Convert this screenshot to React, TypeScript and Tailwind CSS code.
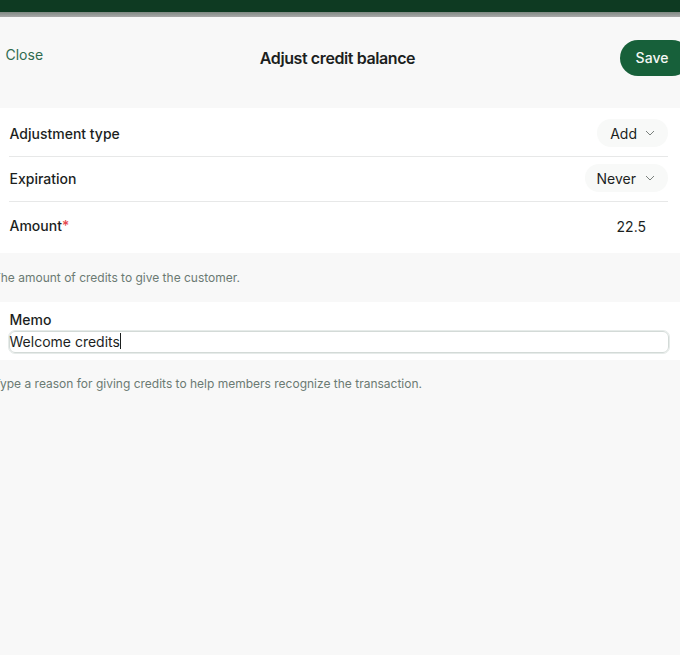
export default function App() {
  const Chevron = () => (
    <svg width="10" height="6" viewBox="0 0 10 6" fill="none" className="ml-[9px] mr-[3px]">
      <path d="M1 1l4 4 4-4" stroke="#7a807d" strokeWidth="1" />
    </svg>
  );
  return (
    <div className="h-[655px] w-[680px] overflow-hidden bg-[#f8f8f8] text-[#1c1f1e] font-['Inter',sans-serif] text-[14px]">
      <div className="h-[12px] bg-[#0e3a22]" />
      <div className="h-[5px] bg-gradient-to-b from-[#7f8883] to-[#a9a9a9]" />
      <header className="relative flex h-[91px] items-start justify-between">
        <button className="mt-[29px] ml-[5.5px] text-[14px] leading-[17px] text-[#2f6b4f]">Close</button>
        <h1 className="absolute left-0 top-[31px] w-[675px] text-center text-[16px] leading-[20px] font-semibold tracking-[-0.4px]">Adjust credit balance</h1>
        <button className="mt-[23px] -mr-[10px] h-[36px] w-[70px] rounded-full bg-[#17603a] pr-[6px] pb-[1px] text-[14px] font-medium text-[#f4f7f5]">Save</button>
      </header>
      <section className="bg-white px-[9px] pr-[12px]">
        <div className="flex h-[49px] items-center justify-between border-b border-[#e7e8e8] pt-[2px] font-[450]">
          <span className="ml-[0.5px]">Adjustment type</span>
          <span className="flex h-[28px] items-center rounded-full bg-[#f8f9f8] pl-[13px] pr-[10px] font-normal"><span className="-mr-[1px]">Add</span><Chevron /></span>
        </div>
        <div className="flex h-[45px] items-center justify-between border-b border-[#e7e8e8] pb-[2px] font-[450]">
          <span className="ml-[0.5px]">Expiration</span>
          <span className="flex h-[28px] items-center rounded-full bg-[#f8f9f8] pl-[12px] pr-[10px] font-normal">Never<Chevron /></span>
        </div>
        <div className="flex h-[51px] items-center justify-between pb-[4px] font-[450]">
          <span className="ml-[0.5px]">Amount<span className="text-[#e5484d]">*</span></span>
          <span className="pr-[22px] pt-[1px] font-normal">22.5</span>
        </div>
      </section>
      <p className="mt-[17px] -ml-[7px] h-[32px] text-[12px] leading-[16px] text-[#6b7a73]">The amount of credits to give the customer.</p>
      <section className="h-[58px] bg-white px-[9px] pr-[11px] pt-[9px]">
        <div className="ml-[0.5px] text-[14px] leading-[17px] font-[450]">Memo</div>
        <div className="mt-[3px] flex h-[22px] items-center rounded-[6px] border border-[#d3dad7] pb-[2px] text-[14px] outline outline-1 outline-[#e6ebe9]">
          <span className="-ml-[0.5px]">Welcome credits</span>
          <span className="h-[16px] w-px bg-[#1c1f1e]" />
        </div>
      </section>
      <p className="mt-[16px] -ml-[7px] text-[12px] leading-[16px] text-[#6b7a73]">Type a reason for giving credits to help members recognize the transaction.</p>
    </div>
  );
}
